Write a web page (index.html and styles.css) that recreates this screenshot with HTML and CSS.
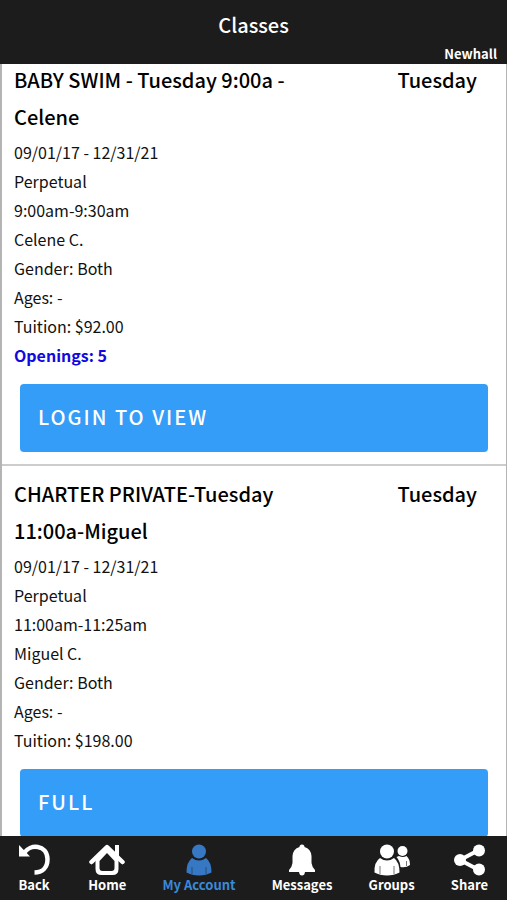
FILE: index.html
```html
<!DOCTYPE html>
<html lang="en">
<head>
<meta charset="utf-8">
<meta name="viewport" content="width=device-width, initial-scale=1">
<title>Classes</title>
<link rel="stylesheet" href="styles.css">
</head>
<body>
<header class="topbar">
  <h1 class="topbar-title">Classes</h1>
  <p class="topbar-location">Newhall</p>
</header>
<main class="class-list">
  <article class="class-card">
    <div class="class-head">
      <h2 class="class-name">BABY SWIM - Tuesday 9:00a - Celene</h2>
      <p class="class-day">Tuesday</p>
    </div>
    <ul class="class-details">
      <li>09/01/17 - 12/31/21</li>
      <li>Perpetual</li>
      <li>9:00am-9:30am</li>
      <li>Celene C.</li>
      <li>Gender: Both</li>
      <li>Ages: -</li>
      <li>Tuition: $92.00</li>
      <li class="openings">Openings: 5</li>
    </ul>
    <button class="class-action" type="button">LOGIN TO VIEW</button>
  </article>
  <article class="class-card">
    <div class="class-head">
      <h2 class="class-name">CHARTER PRIVATE-Tuesday 11:00a-Miguel</h2>
      <p class="class-day">Tuesday</p>
    </div>
    <ul class="class-details">
      <li>09/01/17 - 12/31/21</li>
      <li>Perpetual</li>
      <li>11:00am-11:25am</li>
      <li>Miguel C.</li>
      <li>Gender: Both</li>
      <li>Ages: -</li>
      <li>Tuition: $198.00</li>
    </ul>
    <button class="class-action" type="button">FULL</button>
  </article>
</main>
<nav class="tabbar">
  <a class="tab" href="#back">
    <svg class="tab-icon" viewBox="0 0 36 32" aria-hidden="true">
      <path d="M8 9C14 0 31 0 31.500 15C31.500 24 26 28.500 18.500 28.500" fill="none" stroke="currentColor" stroke-width="4.500"/>
      <path d="M3 1V12.500H14Z" fill="currentColor"/>
    </svg>
    Back
  </a>
  <a class="tab" href="#home">
    <svg class="tab-icon" viewBox="0 0 36 32" aria-hidden="true">
      <path d="M2.500 18L18 3L33.500 18" fill="none" stroke="currentColor" stroke-width="4.500" stroke-linecap="round" stroke-linejoin="round"/>
      <path d="M26 1H30V14H26Z" fill="currentColor"/>
      <path fill-rule="evenodd" d="M6.500 15L18 4L29.500 15V25Q29.500 31 23.500 31H12.500Q6.500 31 6.500 25ZM18 9L10.500 17V24Q10.500 27 13.500 27H22.500Q25.500 27 25.500 24V17Z" fill="currentColor"/>
    </svg>
    Home
  </a>
  <a class="tab tab-active" href="#account" aria-current="page">
    <svg class="tab-icon" viewBox="0 0 36 32" aria-hidden="true">
      <circle cx="18" cy="7.500" r="7" fill="currentColor"/>
      <path d="M11 14Q18 19 25 14Q30.500 18 30.500 28.500Q25 31.500 18 31.500T5.500 28.500Q5.500 18 11 14Z" fill="currentColor"/>
      <path d="M11 23V30M25 23V30" stroke="#1c1c1c" stroke-opacity=".5" stroke-width="1"/>
    </svg>
    <span class="tab-active-label">My Account</span>
  </a>
  <a class="tab" href="#messages">
    <svg class="tab-icon" viewBox="0 0 36 32" aria-hidden="true">
      <path d="M15.500 3Q15.500 .5 18 .5T20.500 3Q27 5 27.500 12V19Q28 23 31 26V28H21Q20.500 31.500 18 31.500T15 28H5V26Q8 23 8.500 19V12Q9 5 15.500 3Z" fill="currentColor"/>
    </svg>
    Messages
  </a>
  <a class="tab" href="#groups">
    <svg class="tab-icon" viewBox="0 0 36 32" aria-hidden="true">
      <circle cx="28.500" cy="7" r="5" fill="currentColor"/>
      <path d="M22.500 13L25 12Q29 14 32.500 12Q36 15 36 21Q32 24 26.500 23Q26 17 22.500 13Z" fill="currentColor"/>
      <circle cx="13" cy="7.500" r="7" fill="currentColor"/>
      <path d="M6 14Q13 19 20 14Q25.500 18 25.500 28.500Q20 31.500 13 31.500T.5 28.500Q0 18 6 14Z" fill="currentColor"/>
      <path d="M6 22V30M20 22V30M32.500 17V22" stroke="#1c1c1c" stroke-opacity=".6" stroke-width="1"/>
    </svg>
    Groups
  </a>
  <a class="tab" href="#share">
    <svg class="tab-icon" viewBox="0 0 36 32" aria-hidden="true">
      <path d="M27 6.500L9 16L27 25.500" fill="none" stroke="currentColor" stroke-width="4"/>
      <circle cx="28" cy="6.500" r="6" fill="currentColor"/>
      <circle cx="9" cy="16" r="6" fill="currentColor"/>
      <circle cx="28" cy="25.500" r="6" fill="currentColor"/>
    </svg>
    Share
  </a>
</nav>
</body>
</html>
```
FILE: styles.css
```css
* {
  box-sizing: border-box;
  margin: 0;
}

body {
  display: flex;
  flex-direction: column;
  height: 100vh;
  overflow: hidden;
  background: #fff;
  color: #111;
  font-family: "Noto Sans CJK SC", "Noto Sans", sans-serif;
  font-size: 16px;
}

.topbar {
  flex: none;
  padding: 7px 10px 0;
  background: #1c1c1c;
  color: #fff;
}

.topbar-title {
  font-size: 20px;
  font-weight: 500;
  line-height: 36px;
  text-align: center;
}

.topbar-location {
  font-size: 13px;
  font-weight: 700;
  line-height: 21px;
  text-align: right;
}

.class-list {
  flex: 1;
  min-height: 0;
  overflow: hidden;
  border: solid #b4b4b4;
  border-width: 0 1px 0 2px;
}

.class-card {
  padding: 9px 18px 12px 12px;
  border-bottom: 2px solid #ccc;
}

.class-card:first-child {
  margin-top: -12px;
}

.class-head {
  display: flex;
  justify-content: space-between;
  gap: 16px;
  padding-right: 11px;
  color: #000;
}

.class-name,
.class-day {
  font-size: 20px;
  font-weight: 500;
  line-height: 37px;
}

.class-name {
  flex: 0 1 300px;
}

.class-details {
  margin-top: 3px;
  padding: 0;
  list-style: none;
  line-height: 29px;
}

.openings {
  color: #1208e0;
  font-weight: 700;
}

.class-action {
  display: block;
  width: calc(100% - 6px);
  height: 68px;
  margin: 14px 0 0 6px;
  padding: 0 18px 3px;
  border: 0;
  border-radius: 4px;
  background: #349df8;
  color: #fff;
  font: 500 20px "Noto Sans CJK SC", "Noto Sans", sans-serif;
  letter-spacing: 2px;
  text-align: left;
}

.tabbar {
  display: flex;
  flex: none;
  justify-content: space-between;
  padding: 8px 19px 7px 16px;
  background: #1c1c1c;
}

.tab {
  display: flex;
  flex-direction: column;
  align-items: center;
  color: #fff;
  font-size: 13px;
  font-weight: 700;
  line-height: 17px;
  text-decoration: none;
}

.tab-active {
  color: #3678c4;
}

.tab-active-label {
  color: #3a8ad8;
}

.tab-icon {
  width: 36px;
  height: 32px;
}
```
